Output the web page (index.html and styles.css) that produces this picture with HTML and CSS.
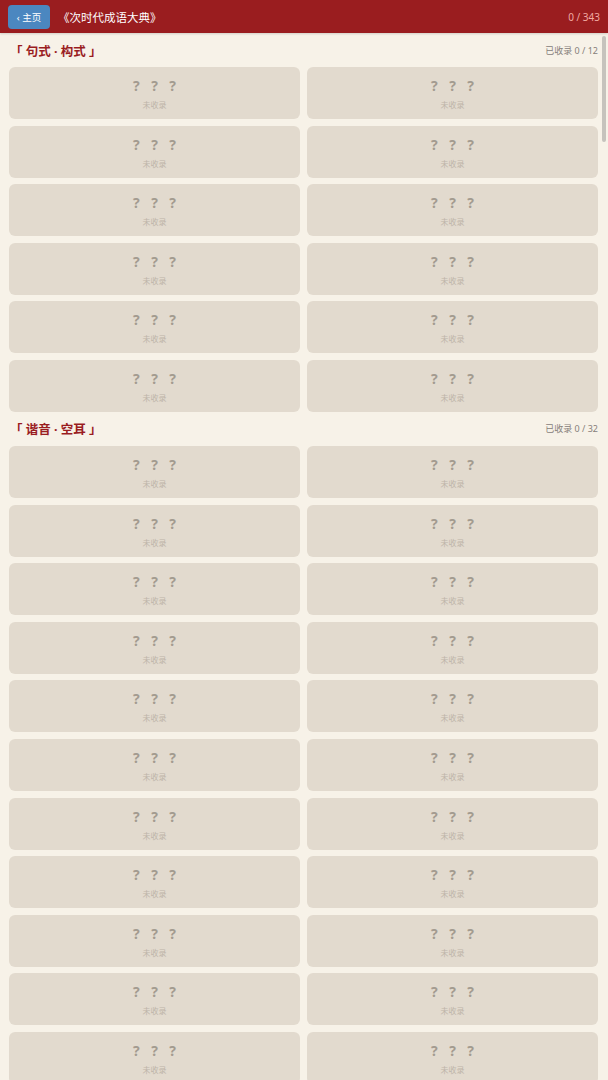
FILE: index.html
```html
<!DOCTYPE html>
<html lang="zh">
<head>
    <meta charset="UTF-8">
    <meta name="viewport" content="width=device-width, initial-scale=1.0">
    <title>次时代成语大典</title>
    <link rel="stylesheet" href="styles.css">
</head>
<body>
    <div class="top-bar">
        <button class="home-btn">‹ 主页</button>
        <div class="book-title">《次时代成语大典》</div>
        <div class="total-count" id="totalCount">0 / 343</div>
    </div>
    <div class="book-wrap">
        <div class="book-body" id="bookBody"></div>
        <div class="scroll-thumb" id="scrollThumb"></div>
    </div>

    <script>
        const TOTAL = 343;
        const categories = [
            { name: '句式 · 构式', total: 12 },
            { name: '谐音 · 空耳', total: 32 }
        ];

        const body = document.getElementById('bookBody');

        categories.forEach(function(cat) {
            const head = document.createElement('div');
            head.className = 'section-head';
            head.innerHTML = `<span class="section-name">「 ${cat.name} 」</span>` +
                `<span class="section-count">已收录 0 / ${cat.total}</span>`;
            body.appendChild(head);

            const grid = document.createElement('div');
            grid.className = 'idiom-grid';
            for (let i = 0; i < cat.total; i++) {
                const card = document.createElement('div');
                card.className = 'idiom-card locked';
                card.innerHTML = '<div class="idiom-word">?<span>?</span>?</div><div class="idiom-state">未收录</div>';
                grid.appendChild(card);
            }
            body.appendChild(grid);
        });

        // thumb size follows the full dictionary length (about 58.6px per row of two)
        const fullHeight = Math.ceil(TOTAL / 2) * 58.6 + 7 * 34;
        const thumb = document.getElementById('scrollThumb');
        thumb.style.height = Math.round(body.clientHeight * body.clientHeight / fullHeight) + 'px';
    </script>
</body>
</html>
```

FILE: styles.css
```css
* {
    box-sizing: border-box;
}
html, body {
    height: 100%;
}
body {
    margin: 0;
    font-family: 'Noto Sans', 'Noto Sans CJK SC', sans-serif;
    background-color: #f7f2e8;
    display: flex;
    flex-direction: column;
    overflow: hidden;
}
.top-bar {
    height: 33px;
    flex: none;
    display: flex;
    align-items: center;
    padding: 0 8px;
    background-color: #9a1d1f;
    color: white;
    box-shadow: 0 1px 2px rgba(0,0,0,0.15);
}
.home-btn {
    width: 42px;
    height: 24px;
    padding: 0;
    border: none;
    border-radius: 4px;
    background-color: #4b87c0;
    color: white;
    font-family: inherit;
    font-size: 9.5px;
    cursor: pointer;
}
.book-title {
    margin-left: 8px;
    font-size: 11.5px;
}
.total-count {
    margin-left: auto;
    font-size: 10px;
    color: #f1aaa2;
}
.book-wrap {
    flex: 1;
    position: relative;
    overflow: hidden;
}
.book-body {
    height: 100%;
    overflow-y: auto;
    padding: 0 10px 9px 9px;
}
.book-body::-webkit-scrollbar {
    display: none;
}
.scroll-thumb {
    position: absolute;
    top: 3px;
    right: 2px;
    width: 4px;
    height: 101px;
    border-radius: 2px;
    background-color: #c6c3bd;
}
.section-head {
    height: 34px;
    display: flex;
    align-items: center;
    justify-content: space-between;
    padding-left: 1px;
}
.section-name {
    font-size: 12.5px;
    font-weight: bold;
    color: #9a1d1f;
}
.section-count {
    font-size: 9px;
    color: #86807a;
}
.idiom-grid {
    display: grid;
    grid-template-columns: 1fr 1fr;
    column-gap: 7px;
    row-gap: 6.6px;
}
.idiom-card {
    height: 52px;
    border-radius: 6px;
    background-color: #e2dace;
    display: flex;
    flex-direction: column;
    align-items: center;
    padding-top: 9px;
}
.idiom-word {
    font-size: 14px;
    font-weight: bold;
    line-height: 20px;
    color: #a39b90;
}
.idiom-word span {
    margin: 0 11.5px;
}
.idiom-state {
    font-size: 8px;
    line-height: 14px;
    color: #bdb4a8;
    margin-top: 2px;
}
```
